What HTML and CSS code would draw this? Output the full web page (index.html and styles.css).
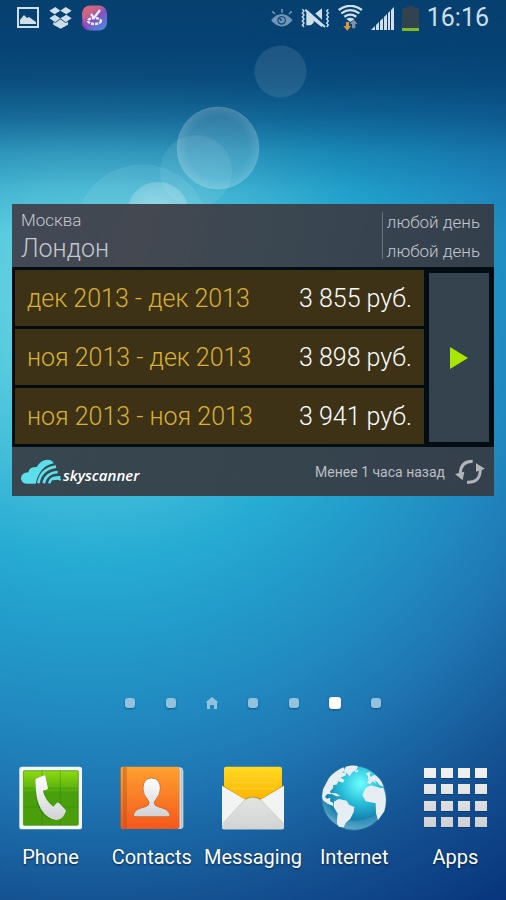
FILE: index.html
```html
<!DOCTYPE html>
<html lang="ru">
<head>
<meta charset="utf-8">
<meta name="viewport" content="width=device-width, initial-scale=1">
<title>Home screen</title>
<link rel="stylesheet" href="styles.css">
</head>
<body>
<div class="screen">
  <svg class="bubbles" viewBox="0 0 506 260" aria-hidden="true">
    <defs>
      <radialGradient id="rim"><stop offset="0" stop-color="#fff" stop-opacity=".12"/><stop offset=".75" stop-color="#fff" stop-opacity=".13"/><stop offset="1" stop-color="#fff" stop-opacity=".22"/></radialGradient>
      <radialGradient id="soft" cy=".5"><stop offset="0" stop-color="#fff" stop-opacity=".38"/><stop offset="1" stop-color="#fff" stop-opacity=".2"/></radialGradient>
    </defs>
    <circle cx="280.500" cy="71.500" r="26" fill="#fff" fill-opacity=".1"/>
    <circle cx="196" cy="171" r="36" fill="#fff" fill-opacity=".08"/>
    <circle cx="218" cy="148" r="41" fill="url(#rim)" stroke="#fff" stroke-opacity=".1"/>
    <circle cx="142" cy="231" r="66" fill="#fff" fill-opacity=".07" stroke="#fff" stroke-opacity=".06"/>
    <circle cx="158" cy="213" r="31" fill="url(#soft)"/>
  </svg>

  <header class="status">
    <div class="notices">
      <svg width="22" height="22" viewBox="0 0 22 22" aria-hidden="true"><path d="M1 1h20v19H1z" fill="none" stroke="#cfdfea" stroke-width="2"/><path d="M3 17v-4l4-5 3 3 2-1 7 5v2z" fill="#cfdfea"/></svg>
      <svg width="23" height="22" viewBox="151 21 69 66" aria-hidden="true"><path d="M170 21l15 11-17 11-16-11zM201 21l18 11-16 11-18-11zM168 44l17 11-15 12-18-12zM203 44l16 11-18 12-16-12zM185 58l16 11 7-4v9l-22 12-22-12v-9l6 4z" fill="#cfdfea"/></svg>
      <svg width="25" height="26" viewBox="0 0 25 26" aria-hidden="true">
        <defs><linearGradient id="app" x2=".7" y2="1"><stop offset="0" stop-color="#df6673"/><stop offset=".35" stop-color="#c7648b"/><stop offset=".6" stop-color="#8054c0"/><stop offset="1" stop-color="#5285dc"/></linearGradient></defs>
        <rect width="25" height="25" y=".5" rx="8" fill="url(#app)"/><path d="M0 10q1 12 8 15-7-1-8-7z" fill="#9b35c0"/>
        <path d="M9 9l3 4 6-8" fill="none" stroke="#edf1f6" stroke-width="2.200"/><ellipse cx="12.500" cy="16" rx="6.500" ry="3" fill="none" stroke="#e8ecf7" stroke-width="2.400" stroke-dasharray="3 1"/>
      </svg>
    </div>
    <div class="system">
      <svg width="22" height="18" viewBox="55 26 66 54" aria-hidden="true"><path d="M55 60q32-38 65 0-33 37-65 0z" fill="#7095b6"/><circle cx="87" cy="60" r="13" fill="#174c7c"/><circle cx="87" cy="60" r="9" fill="#7095b6"/><path d="M88 26v11M59 33l8 8M117 33l-8 8" stroke="#7095b6" stroke-width="5"/><path d="M87 61l-7-8" stroke="#174c7c" stroke-width="5"/></svg>
      <svg width="29" height="20" viewBox="147 22 87 60" aria-hidden="true"><path d="M163 31h13l9 8v27l-9 8h-13zM185 42l25-19v57l-25-20z" fill="#cfdfea"/><path d="M166 24l55 51" stroke="#07447a" stroke-width="11"/><path d="M160 27l59 52" stroke="#cfdfea" stroke-width="6"/><path d="M151 26l5 5-5 6 5 6-5 6 5 6-5 6 5 6-5 6 5 6M229 26l-5 5 5 6-5 6 5 6-5 6 5 6-5 6 5 6-5 6" fill="none" stroke="#cfdfea" stroke-width="4"/></svg>
      <svg width="25" height="26" viewBox="256 13 75 78" aria-hidden="true"><path d="M258 28q35-25 70 0M266 38q27-19 54 0M275 48q18-12 36 0" fill="none" stroke="#cfdfea" stroke-width="7"/><path d="M281 55q12-8 24 0l-12 9z" fill="#cfdfea"/><path d="M280 64h9v12h6l-11 14-12-14h8z" fill="#df9640"/><path d="M298 83V70h-6l11-14 11 14h-6v13z" fill="#7c91a5"/></svg>
      <svg width="23" height="23" viewBox="0 0 23 23" aria-hidden="true"><path d="M0 23l4-4v4zM5 23v-5l3-3v8zM9 23v-9l3-3v12zM13 23V10l3-3v16zM17 23V6l2-2v19zM20 23V3l3-3v23z" fill="#cfdfea"/></svg>
      <svg width="17" height="26" viewBox="0 0 17 26" aria-hidden="true"><path d="M5 1h7v2h5v20H0V3h5z" fill="#33434e"/><path d="M0 23h17v3H0z" fill="#7dbb20"/></svg>
      <time class="clock">16:16</time>
    </div>
  </header>

  <main class="widget">
    <div class="route">
      <div class="cities">
        <div class="from">Москва</div>
        <div class="to">Лондон</div>
      </div>
      <div class="days">
        <div>любой день</div>
        <div>любой день</div>
      </div>
    </div>
    <div class="fares">
      <table class="prices">
        <tbody>
          <tr><th scope="row">дек 2013 - дек 2013</th><td>3 855 руб.</td></tr>
          <tr><th scope="row">ноя 2013 - дек 2013</th><td>3 898 руб.</td></tr>
          <tr><th scope="row">ноя 2013 - ноя 2013</th><td>3 941 руб.</td></tr>
        </tbody>
      </table>
      <button class="next" type="button" aria-label="Далее"><svg width="18" height="22" viewBox="0 0 18 22" aria-hidden="true"><path d="M0 0l18 11L0 22z" fill="#a9e600"/></svg></button>
    </div>
    <div class="foot">
      <a class="brand" href="#">
        <svg width="40" height="25" viewBox="61 265 120 75" aria-hidden="true"><path d="M78 339q-17-1-17-17 1-15 22-17 2-16 25-16 13-22 32-22 15 0 19 11-42 8-54 61z" fill="#5cdfeb"/><path d="M113 338q7-43 53-50M129 338q5-30 42-34M146 338q3-20 33-18" fill="none" stroke="#5cdfeb" stroke-width="8"/><path d="M157 326q16-5 23 2" fill="none" stroke="#5cdfeb" stroke-width="6"/></svg>
        <span>skyscanner</span>
      </a>
      <span class="updated">Менее 1 часа назад</span>
      <button class="refresh" type="button" aria-label="Обновить"><svg width="30" height="26" viewBox="606 270 90 78" aria-hidden="true"><path d="M659 277Q624 277 622 312M642 340Q681 342 682 302" fill="none" stroke="#b2b4b9" stroke-width="9"/><path d="M606 315l28-7-5 26zM669 283l27 16-27 9z" fill="#b2b4b9"/></svg></button>
    </div>
  </main>

  <nav class="pages" aria-label="Pages">
    <span class="page"><i class="dot"></i></span>
    <span class="page"><i class="dot"></i></span>
    <span class="page"><svg width="12" height="12" viewBox="0 0 12 12" aria-hidden="true"><path d="M6 0l6 5-1 1v6H8V8H4v4H1V6L0 5z" fill="#91c3df"/></svg></span>
    <span class="page"><i class="dot"></i></span>
    <span class="page"><i class="dot"></i></span>
    <span class="page"><i class="dot current"></i></span>
    <span class="page"><i class="dot"></i></span>
  </nav>

  <nav class="dock" aria-label="Dock">
    <a class="app" href="#">
      <svg width="66" height="66" viewBox="53 43 198 198" aria-hidden="true">
        <defs><linearGradient id="green" x2="0" y2="1"><stop offset="0" stop-color="#8ddc10"/><stop offset=".35" stop-color="#58ae0d"/><stop offset=".4" stop-color="#48a00c"/><stop offset="1" stop-color="#4a9e0a"/></linearGradient><linearGradient id="white" x2="0" y2="1"><stop offset="0" stop-color="#fff"/><stop offset="1" stop-color="#d0d2d3"/></linearGradient></defs>
        <rect x="57" y="48" width="188" height="188" rx="8" fill="#f3f6f8"/><rect x="69" y="60" width="165" height="164" rx="3" fill="url(#green)" stroke="#3f8519" stroke-width="2"/>
        <path d="M180 60v164M125 60v164M69 113h165M69 169h165" stroke="#2f780b" stroke-opacity=".55" stroke-width="2"/>
        <path d="M104 91q0-8 8-10l21-8q3 0 4 6l7 34q0 3-4 4l-12 4q7 29 31 47l10-11q4-3 8 1l19 20q2 3 1 6-15 25-37 25-28-6-43-33-14-30-13-85z" fill="#267006" opacity=".5"/>
        <path d="M105 88q0-4 6-6l21-8q3-1 4 4l7 35q0 3-4 4l-11 3q5 28 31 48l10-11q4-3 8 1l19 20q2 3 0 6-3 8-8 14-11 12-22 10-27-6-43-31-18-28-18-89z" fill="url(#white)"/>
      </svg>
      <span>Phone</span>
    </a>
    <a class="app" href="#">
      <svg width="66" height="66" viewBox="357 43 198 198" aria-hidden="true">
        <defs><linearGradient id="orange" x2="0" y2="1"><stop offset="0" stop-color="#ffa12f"/><stop offset="1" stop-color="#f4571b"/></linearGradient></defs>
        <path d="M530 50h12q8 3 8 12v164q0 8-10 9h-12z" fill="#d3dadd"/><path d="M538 55v178M545 57v174" stroke="#9eabb4" stroke-width="2"/>
        <rect x="362" y="48" width="176" height="187" rx="6" fill="url(#orange)"/><path d="M372 49v185" stroke="#c25418" stroke-width="3"/><path d="M378 49v185" stroke="#99501e" stroke-width="2"/>
        <path d="M400 198q0-20 24-26 18-5 21-9 5-8-1-14-15-18-15-35 0-31 26-32 26 1 26 32 0 17-15 35-6 6-1 14 3 4 21 9 24 6 24 26z" fill="url(#white)" stroke="#c4511a" stroke-width="2"/>
      </svg>
      <span>Contacts</span>
    </a>
    <a class="app" href="#">
      <svg width="66" height="66" viewBox="660 43 198 198" aria-hidden="true">
        <defs><linearGradient id="yellow" x2="0" y2="1"><stop offset="0" stop-color="#ffda20"/><stop offset="1" stop-color="#fcb400"/></linearGradient><linearGradient id="flap" x2="0" y2="1"><stop offset="0" stop-color="#e2e3e3"/><stop offset="1" stop-color="#d2d4d4"/></linearGradient></defs>
        <path d="M672 54q0-6 6-6h161q7 0 7 6v94H672z" fill="url(#yellow)"/><path d="M700 78h120M692 96h134M692 114h134" stroke="#ffd854" stroke-width="2"/><path d="M667 103l67 42q25-14 50 0l67-42v10l-62 36h-60l-62-36z" fill="#a87613" opacity=".7"/>
        <path d="M666 105l72 43h42l72-43v124q0 7-8 7H674q-8 0-8-7z" fill="#f2f4f4"/>
        <path d="M668 220l66-72q23-15 48 0l70 72v9q0 7-8 7H674q-8 0-8-7z" fill="url(#flap)"/><path d="M668 219l66-71q23-15 48 0l69 71" fill="none" stroke="#b7babb" stroke-width="2"/>
      </svg>
      <span>Messaging</span>
    </a>
    <a class="app" href="#">
      <svg width="66" height="66" viewBox="205 43 198 198" aria-hidden="true">
        <defs><radialGradient id="sea" cx=".6" cy=".28" r=".75"><stop offset="0" stop-color="#6cffff"/><stop offset=".4" stop-color="#28bfd9"/><stop offset=".75" stop-color="#1580af"/><stop offset="1" stop-color="#67a9c8"/></radialGradient></defs>
        <circle cx="304" cy="142" r="97" fill="url(#sea)" stroke="#206e9c" stroke-width="3"/>
        <path d="M213 177q32 42 91 34 56-4 91-36-24 59-91 62-65-4-91-60z" fill="#73b5d3" opacity=".28"/>
        <g fill="#e6edf3">
          <path d="M229 82q17-20 43-32l5 9-9 8 11-2 1 9-16 7 12 7-5 8-14-4-5 10-10 1-1 10-9 9 3 9-11-1-7 8 5 6 11-3-1 11 10 5-1 9-16-7-14-10-3-11 3-22z"/>
          <path d="M279 48q23-6 37-1l-5 10-12 8-8 12-7-8-10-5zM307 60l11-2-3 6-8 1zM231 127l19 1 13 8-11 1zM340 67l15-3-4 9 4 8-10 7 2-10z"/>
          <path d="M244 153l14-8 24 5 7 12 16 7-2 15-10 20-14 13-6 13-14-2q-7-5-6-22l2-17-12-20z"/>
          <path d="M343 97l10-18 13-7 13 11q9 10 14 25l-12-4-7-9-8-6 5 10-11-7-8 8z"/>
          <path d="M338 113l17-9 29 8 8-1q14 32 3 71l-19 27-6-22-1-29-30-6-10-19z"/>
        </g>
      </svg>
      <span>Internet</span>
    </a>
    <a class="app" href="#">
      <svg width="66" height="66" viewBox="0 0 66 66" aria-hidden="true">
        <defs><linearGradient id="tiles" x2="0" y2="1"><stop offset="0" stop-color="#f2f2f2"/><stop offset="1" stop-color="#cfd0d1"/></linearGradient></defs>
        <path d="M2 4h12v10H2zM19 4h12v10H19zM36 4h12v10H36zM53 4h12v10H53zM2 20h12v10H2zM19 20h12v10H19zM36 20h12v10H36zM53 20h12v10H53zM2 37h12v10H2zM19 37h12v10H19zM36 37h12v10H36zM53 37h12v10H53zM2 53h12v10H2zM19 53h12v10H19zM36 53h12v10H36zM53 53h12v10H53z" fill="#09325f" opacity=".6"/>
        <path d="M2 3h12v10H2zM19 3h12v10H19zM36 3h12v10H36zM53 3h12v10H53zM2 19h12v10H2zM19 19h12v10H19zM36 19h12v10H36zM53 19h12v10H53zM2 36h12v10H2zM19 36h12v10H19zM36 36h12v10H36zM53 36h12v10H53zM2 52h12v10H2zM19 52h12v10H19zM36 52h12v10H36zM53 52h12v10H53z" fill="url(#tiles)"/>
      </svg>
      <span>Apps</span>
    </a>
  </nav>
</div>
</body>
</html>
```

FILE: styles.css
```css
* { box-sizing: border-box; }

body {
  margin: 0;
  font-family: Roboto, "Noto Sans", sans-serif;
}

a { color: inherit; text-decoration: none; }
button { padding: 0; border: 0; background: none; cursor: pointer; }
svg { display: block; flex: none; }

.screen {
  position: relative;
  display: flex;
  flex-direction: column;
  min-height: 100vh;
  overflow: hidden;
  background:
    linear-gradient(#06406f 0, rgba(5, 64, 114, .98) 5%, rgba(5, 66, 116, .9) 9%, rgba(6, 74, 126, .72) 13%, rgba(8, 88, 142, .42) 17%, rgba(10, 100, 160, .18) 21%, rgba(10, 110, 170, 0) 26%),
    radial-gradient(circle farthest-corner at 18% 32%, #6fd3e4 0, #5accdf 14%, #41bcd9 26%, #26abd3 37%, #229ac9 48%, #2188bf 59%, #1e74b1 69%, #155393 83%, #08347c 100%);
}

.bubbles {
  position: absolute;
  top: 0;
  left: 0;
  width: 100%;
}

.status {
  position: relative;
  display: flex;
  justify-content: space-between;
  height: 36px;
  padding: 0 17px;
  color: #cfdfea;
}
.notices, .system { display: flex; align-items: center; }
.notices { gap: 10px; }
.system { gap: 8px; }
.clock { font-size: 25px; line-height: 36px; }

.widget {
  position: relative;
  margin: 168px 12px 0;
  background: #010d13;
  font-weight: 300;
}

.route {
  display: flex;
  justify-content: space-between;
  height: 63px;
  padding: 8px 14px 8px 9px;
  background: linear-gradient(100deg, #414955, #434851 28%, #3b4751 50%, #33404c);
  color: #c4c8cf;
}
.from { font-size: 17px; line-height: 16px; }
.to { font-size: 25px; line-height: 42px; }
.days {
  padding-left: 4px;
  border-left: 1px solid #69737c;
  font-size: 17px;
}
.days div { line-height: 20px; }
.days div + div { margin-top: 9px; }

.fares {
  display: flex;
  padding: 0 5px 0 3px;
}
.prices {
  flex: 1;
  border-spacing: 0 3px;
  background: #010d13;
}
.prices th, .prices td {
  height: 56px;
  padding: 2px 12px 0;
  background: #3e3216;
  font-size: 25px;
  font-weight: 300;
  line-height: 30px;
  white-space: nowrap;
}
.prices th { text-align: left; color: #d9b132; }
.prices td { text-align: right; color: #fff; }

.next {
  display: grid;
  place-items: center;
  width: 60px;
  margin: 6px 0 5px 5px;
  background: #35434f;
}

.foot {
  display: flex;
  align-items: center;
  height: 49px;
  padding: 0 9px;
  background: linear-gradient(100deg, #37464f, #36444e 60%, #34404c);
}
.brand {
  display: flex;
  align-items: center;
  gap: 2px;
  color: #fff;
  font-family: "Open Sans", Roboto, sans-serif;
  font-size: 15px;
  font-style: italic;
  font-weight: 600;
}
.brand span { padding-top: 6px; }
.updated {
  margin-left: auto;
  color: #bbbec3;
  font-size: 14px;
  font-weight: 400;
}
.refresh { margin-left: 10px; }

.pages {
  position: relative;
  display: flex;
  justify-content: center;
  align-items: center;
  height: 20px;
  margin-top: auto;
}
.page { display: grid; place-items: center; width: 41px; }
.dot {
  width: 10px;
  height: 10px;
  border-radius: 3px;
  background: #91c3df;
  box-shadow: 0 1px 2px rgba(0, 40, 80, .5);
}
.dot.current { width: 12px; height: 12px; background: #fff; }

.dock {
  position: relative;
  display: grid;
  grid-template-columns: repeat(5, 1fr);
  padding: 52px 0 31px;
}
.app {
  display: flex;
  flex-direction: column;
  align-items: center;
  gap: 14px;
  color: #fff;
  font-size: 20px;
  line-height: 24px;
  text-shadow: 0 1px 2px rgba(0, 20, 50, .8);
}
```
